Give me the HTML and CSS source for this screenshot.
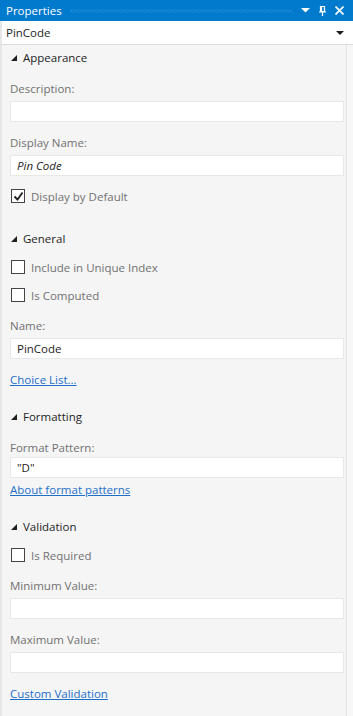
FILE: index.html
```html
<!DOCTYPE html>
<html lang="en">
<head>
  <meta charset="UTF-8" />
  <title>Properties</title>
  <link rel="stylesheet" href="styles.css">
</head>
<body>
  <div class="panel">
    <div class="titlebar">
      <span class="title">Properties</span>
      <span class="grip"></span>
      <span class="tb-icons">
        <svg width="9" height="5" viewBox="0 0 9 5"><polygon points="0,0 9,0 4.5,4.5" fill="#fff"/></svg>
        <svg width="7" height="10" viewBox="0 0 7 10"><path d="M1.5 0.5h4v5h-4z M2.5 0.5v5 M0 6h7 M3.5 6v4" stroke="#fff" stroke-width="1.2" fill="none"/></svg>
        <svg width="9" height="9" viewBox="0 0 9 9"><path d="M0.5 0.5l8 8 M8.5 0.5l-8 8" stroke="#fff" stroke-width="1.6"/></svg>
      </span>
    </div>

    <div class="combo">
      <span>PinCode</span>
      <svg width="8" height="4" viewBox="0 0 8 4"><polygon points="0,0 8,0 4,4" fill="#1e1e1e"/></svg>
    </div>

    <div class="content">
      <div class="group-head first"><svg class="tri" width="6" height="6" viewBox="0 0 6 6"><polygon points="6,0 6,6 0,6" fill="#1e1e1e"/></svg>Appearance</div>
      <div class="label">Description:</div>
      <div class="input"></div>
      <div class="label">Display Name:</div>
      <div class="input italic">Pin Code</div>
      <div class="check-row">
        <span class="box"><svg width="11" height="11" viewBox="0 0 11 11"><path d="M1.5 5.5l3 3 5-7" stroke="#1e1e1e" stroke-width="1.8" fill="none"/></svg></span>
        Display by Default
      </div>

      <div class="group-head"><svg class="tri" width="6" height="6" viewBox="0 0 6 6"><polygon points="6,0 6,6 0,6" fill="#1e1e1e"/></svg>General</div>
      <div class="check-row"><span class="box"></span>Include in Unique Index</div>
      <div class="check-row"><span class="box"></span>Is Computed</div>
      <div class="label">Name:</div>
      <div class="input">PinCode</div>
      <a class="link" href="#">Choice List...</a>

      <div class="group-head"><svg class="tri" width="6" height="6" viewBox="0 0 6 6"><polygon points="6,0 6,6 0,6" fill="#1e1e1e"/></svg>Formatting</div>
      <div class="label">Format Pattern:</div>
      <div class="input tight">"D"</div>
      <a class="link near" href="#">About format patterns</a>

      <div class="group-head"><svg class="tri" width="6" height="6" viewBox="0 0 6 6"><polygon points="6,0 6,6 0,6" fill="#1e1e1e"/></svg>Validation</div>
      <div class="check-row"><span class="box"></span>Is Required</div>
      <div class="label">Minimum Value:</div>
      <div class="input"></div>
      <div class="label">Maximum Value:</div>
      <div class="input"></div>
      <a class="link" href="#">Custom Validation</a>
    </div>
  </div>
</body>
</html>
```

FILE: styles.css
```css
body {
  margin: 0;
  font-family: "Open Sans", "Noto Sans", sans-serif;
  font-size: 11.5px;
  background: #f7f7f7;
}
.panel {
  width: 353px;
  height: 716px;
  display: flex;
  flex-direction: column;
  overflow: hidden;
}
.titlebar {
  height: 21px;
  background: #007acc;
  color: #fff;
  display: flex;
  align-items: center;
  padding: 0 9px 0 6px;
}
.title {
  font-size: 11.5px;
}
.grip {
  flex: 1;
  height: 4px;
  margin: 1px 8px 0 8px;
  background-image:
    radial-gradient(circle, #3f97da 0.6px, transparent 0.7px),
    radial-gradient(circle, #3f97da 0.6px, transparent 0.7px);
  background-size: 3px 3px;
  background-position: 0 0, 1.5px 1.5px;
}
.tb-icons {
  display: flex;
  align-items: center;
  gap: 9px;
}
.combo {
  height: 23px;
  background: #fff;
  border-bottom: 1px solid #dadada;
  border-left: 2px solid #e6e6e6;
  display: flex;
  align-items: center;
  justify-content: space-between;
  padding: 0 9px 0 4px;
  color: #1e1e1e;
}
.content {
  flex: 1;
  background: #f5f5f5;
  border-left: 2px solid #e6e6e6;
  border-right: 1px solid #e4e4e4;
  margin-right: 6px;
  padding: 0 2px 0 8px;
  display: flex;
  flex-direction: column;
  color: #717171;
}
.group-head {
  height: 20px;
  line-height: 20px;
  color: #1e1e1e;
  margin-top: 19px;
  display: flex;
  align-items: center;
}
.group-head.first {
  margin-top: 3px;
}
.check-row + .group-head {
  margin-top: 25px;
}
.tri {
  margin: 0 6px 0 1px;
}
.label {
  height: 16px;
  line-height: 16px;
  margin-top: 13px;
}
.check-row + .label {
  margin-top: 15px;
}
.input {
  height: 19px;
  line-height: 19px;
  margin-top: 4px;
  background: #fff;
  border: 1px solid #e8e8e8;
  padding: 0 6px;
  color: #1e1e1e;
}
.input.tight {
  margin-top: 1px;
}
.italic {
  font-style: italic;
}
.check-row {
  height: 16px;
  margin-top: 12px;
  display: flex;
  align-items: center;
  color: #717171;
}
.group-head + .check-row {
  margin-top: 10px;
}
.box {
  width: 12px;
  height: 12px;
  margin: 0 6px 0 1px;
  border: 1px solid #444;
  background: #fff;
  display: flex;
  align-items: center;
  justify-content: center;
}
.link {
  height: 16px;
  line-height: 16px;
  margin-top: 13px;
  color: #1e6fc8;
  align-self: flex-start;
}
.link.near {
  margin-top: 4px;
}
```
